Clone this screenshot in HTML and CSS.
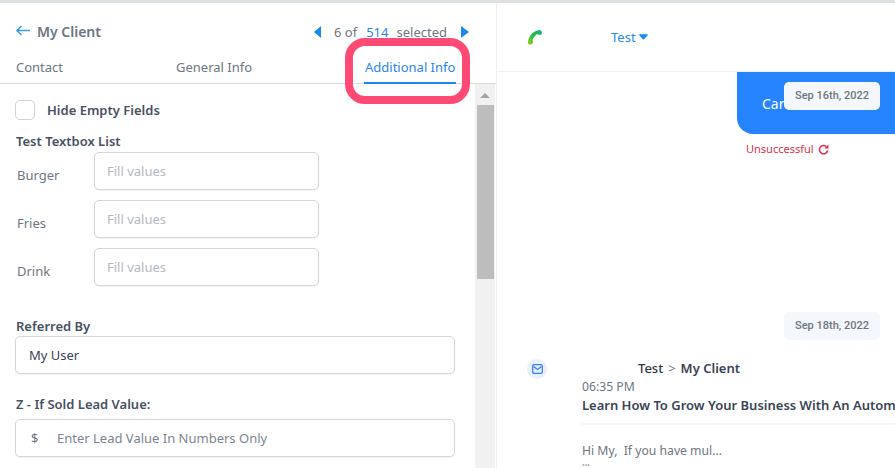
FILE: index.html
```html
<!DOCTYPE html>
<html lang="en">
<head>
<meta charset="utf-8">
<title>My Client</title>
<link rel="stylesheet" href="styles.css">
</head>
<body>
<div class="app">
  <section class="left">
    <header class="top">
      <div class="who">
        <svg class="back" width="15" height="12" viewBox="0 0 15 12"><path d="M15 5.500H2M6.500 1 2 5.500 6.500 10" fill="none" stroke="#3b9fe6" stroke-width="1.700"/></svg>
        <span>My Client</span>
      </div>
      <div class="pager">
        <svg width="8" height="12" viewBox="0 0 8 12"><path d="M7 0v12L0 6z" fill="#1b87f0"/></svg>
        <span class="count">6 of</span>
        <span class="link">514</span>
        <span class="sel">selected</span>
        <svg width="8" height="12" viewBox="0 0 8 12"><path d="M0 0v12l8-6z" fill="#1b87f0"/></svg>
      </div>
    </header>
    <nav class="tabs">
      <a class="tab t1">Contact</a>
      <a class="tab t2">General Info</a>
      <a class="tab t3 active">Additional Info</a>
    </nav>
    <div class="body">
      <div class="form">
        <label class="hide"><span class="box"></span><span>Hide Empty Fields</span></label>
        <div class="label first">Test Textbox List</div>
        <div class="row"><span class="rname">Burger</span><div class="input small fill">Fill values</div></div>
        <div class="row"><span class="rname">Fries</span><div class="input small fill">Fill values</div></div>
        <div class="row"><span class="rname">Drink</span><div class="input small fill">Fill values</div></div>
        <div class="label ref">Referred By</div>
        <div class="input wide val">My User</div>
        <div class="label sold">Z - If Sold Lead Value:</div>
        <div class="input wide ph"><span class="dollar">$</span>Enter Lead Value In Numbers Only</div>
      </div>
      <div class="scrollbar"><span class="arrow"></span><span class="thumb"></span></div>
    </div>
    <div class="highlight"></div>
  </section>
  <section class="right">
    <header class="chat-top">
      <svg class="phone" width="16" height="16" viewBox="0 0 16 16"><defs><linearGradient id="g" x1="0" y1="1" x2="1" y2="0"><stop offset="0" stop-color="#9ccc1f"/><stop offset=".5" stop-color="#22bb44"/><stop offset="1" stop-color="#10b08a"/></linearGradient></defs><path d="M1 14C1 8 5 2.500 12 1c1.500 0 3 1 3 2.500 0 1.500-1 2.500-2.500 2.500L10 5C8 6.500 6.500 8.500 5.500 11L6 13c0 1.500-1 2.500-2.500 2.500C2 15.500 1 15 1 14z" fill="url(#g)"/></svg>
      <span class="test">Test</span>
      <svg class="caret" width="9" height="6" viewBox="0 0 9 6"><path d="M.8.200h7.400c.6 0 .9.700.5 1.100L5 5.200c-.3.300-.8.300-1.100 0L.3 1.300C-.1.900.2.200.8.200z" fill="#1b87f0"/></svg>
    </header>
    <div class="thread">
      <div class="bubble">Car</div>
      <div class="date d1">Sep 16th, 2022</div>
      <div class="fail">Unsuccessful
        <svg width="11" height="11" viewBox="0 0 11 11"><path d="M9.600 6.500A4.100 4.100 0 1 1 8.400 2.700" fill="none" stroke="#d9304f" stroke-width="1.500"/><path d="M10.500.5v4H6.500z" fill="#d9304f"/></svg>
      </div>
      <div class="date d2">Sep 18th, 2022</div>
      <div class="msg">
        <span class="mail"><svg width="11" height="10" viewBox="0 0 11 10"><rect x=".7" y=".7" width="9.600" height="8.600" rx="1.200" fill="#e3eeff" stroke="#3d7ff5" stroke-width="1.300"/><path d="M1.500 2.500 5.500 5.500 9.500 2.500" fill="none" stroke="#3d7ff5" stroke-width="1.300"/></svg></span>
        <div class="msg-body">
          <div class="route"><span class="from">Test</span><span class="gt">&gt;</span><span class="to">My Client</span></div>
          <div class="time">06:35 PM</div>
          <div class="subject">Learn How To Grow Your Business With An Automated Marketing System</div>
          <div class="rule"></div>
          <div class="preview">Hi My,&nbsp; If you have mul...</div>
          <div class="dots">•••</div>
        </div>
      </div>
    </div>
  </section>
</div>
</body>
</html>
```
FILE: styles.css
```css
* { box-sizing: border-box; }
html, body { margin: 0; height: 100%; overflow: hidden; background: #fff; }
body { font-family: "Noto Sans", "Open Sans", sans-serif; font-size: 13px; color: #2d3748; }
.app { display: flex; width: 895px; height: 468px; border-top: 3px solid #e4e7ea; border-image: linear-gradient(#dde1e4, #f3f4f6) 1; }
.left { position: relative; width: 497px; flex: none; display: flex; flex-direction: column; border-right: 1px solid #edf0f3; }
.top { display: flex; justify-content: space-between; align-items: center; height: 47px; padding: 10px 27px 0 15px; }
.who { display: flex; align-items: center; gap: 7px; font-size: 14px; font-weight: 600; color: #6a7584; }
.back { margin-top: -2px; }
.pager { display: flex; align-items: center; color: #6e7681; font-size: 13px; }
.count { margin-left: 12px; }
.link { margin-left: 9px; color: #2787e8; text-decoration: underline; }
.sel { margin: 0 14px 0 8px; }
.tabs { position: relative; height: 34px; border-bottom: 1px solid #d9dbdf; display: flex; padding-left: 16px; }
.tab { display: block; height: 33px; padding-top: 8px; color: #6e7681; font-size: 13px; line-height: 18px; }
.t1 { width: 160px; }
.t2 { width: 188px; }
.t3 { width: 92px; padding-left: 1px; }
.active { color: #2787e8; border-bottom: 2px solid #1b87f0; height: 34px; }
.body { flex: 1; display: flex; min-height: 0; }
.form { width: 475px; flex: none; padding: 15px 20px 0 15px; }
.hide { display: flex; align-items: center; height: 22px; font-weight: 600; color: #475162; }
.box { width: 20px; height: 20px; margin-right: 12px; border: 1px solid #ced1d9; border-radius: 5px; background: #fff; }
.label { margin-left: 1px; font-weight: 600; color: #475162; line-height: 18px; font-size: 13px; }
.first { margin-top: 11px; }
.ref { margin-top: 31px; }
.sold { margin-top: 21px; margin-bottom: 6px; }
.row { display: flex; align-items: center; height: 38px; margin-bottom: 10px; }
.first + .row { margin-top: 2px; }
.rname { width: 79px; padding: 8px 0 0 2px; color: #6e7681; }
.input { display: flex; align-items: center; height: 38px; background: #fff; border: 1px solid #d4d6dd; border-radius: 5px; box-shadow: 0 1px 1px rgba(40, 50, 80, .06); padding-left: 12px; }
.small { width: 225px; }
.wide { width: 440px; }
.fill { color: #b4b8c1; }
.ph { color: #7d8490; }
.val { color: #3d3f55; margin-top: 1px; padding-left: 13px; }
.dollar { width: 29px; padding-left: 3px; color: #6e7681; }
.scrollbar { width: 20px; background: #f1f1f1; display: flex; flex-direction: column; align-items: center; position: relative; }
.arrow { margin-top: 9px; border: 5px solid transparent; border-top: 0; border-bottom: 5px solid #a3a3a3; }
.thumb { position: absolute; top: 21px; left: 2px; width: 17px; height: 174px; background: #bdbdbd; }
.highlight { position: absolute; left: 345px; top: 35px; width: 125px; height: 66px; border: 8px solid #ff4a75; border-radius: 20px; }
.right { flex: 1; min-width: 0; display: flex; flex-direction: column; overflow: hidden; }
.chat-top { height: 69px; flex: none; display: flex; align-items: center; border-bottom: 1px solid #edf0f3; padding: 0 0 0 30px; }
.phone { margin-right: 68px; }
.test { color: #2787e8; margin-right: 3px; font-size: 13px; }
.thread { position: relative; flex: 1; }
.bubble { position: absolute; left: 240px; top: 0; width: 200px; height: 62px; background: #2684ff; color: #fff; border-bottom-left-radius: 16px; padding: 23px 0 0 25px; font-size: 14px; line-height: 18px; }
.date { position: absolute; font-family: Roboto, sans-serif; font-weight: 500; font-size: 11px; line-height: 28px; height: 28px; background: #f4f7fb; color: #6f757e; border-radius: 5px; text-align: center; }
.d1 { left: 287px; top: 10px; width: 96px; }
.d2 { left: 287px; top: 240px; width: 96px; }
.fail { position: absolute; left: 249px; top: 68px; color: #d9304f; font-size: 11px; line-height: 18px; display: flex; align-items: center; gap: 4px; }
.msg { position: absolute; left: 30px; top: 287px; display: flex; width: 400px; }
.mail { flex: none; width: 20px; height: 20px; border-radius: 50%; background: #e8f0fd; display: flex; align-items: center; justify-content: center; margin-right: 35px; }
.msg-body { flex: none; width: 345px; overflow: hidden; }
.route { padding-left: 56px; display: flex; gap: 5px; font-weight: 500; color: #2d3748; line-height: 18px; }
.to { font-weight: 600; color: #3a4454; }
.gt { color: #6e7681; font-weight: 400; }
.time { font-size: 12.2px; color: #6e7681; line-height: 18px; margin-top: 1px; }
.subject { font-weight: 600; white-space: nowrap; color: #3a4454; line-height: 18px; }
.rule { height: 2px; background: #f2f5f9; margin-top: 9px; width: 345px; }
.preview { font-size: 12.2px; color: #6e7681; margin-top: 17px; line-height: 18px; }
.dots { font-size: 7px; color: #9aa0aa; line-height: 8px; margin-top: 2px; }
```
